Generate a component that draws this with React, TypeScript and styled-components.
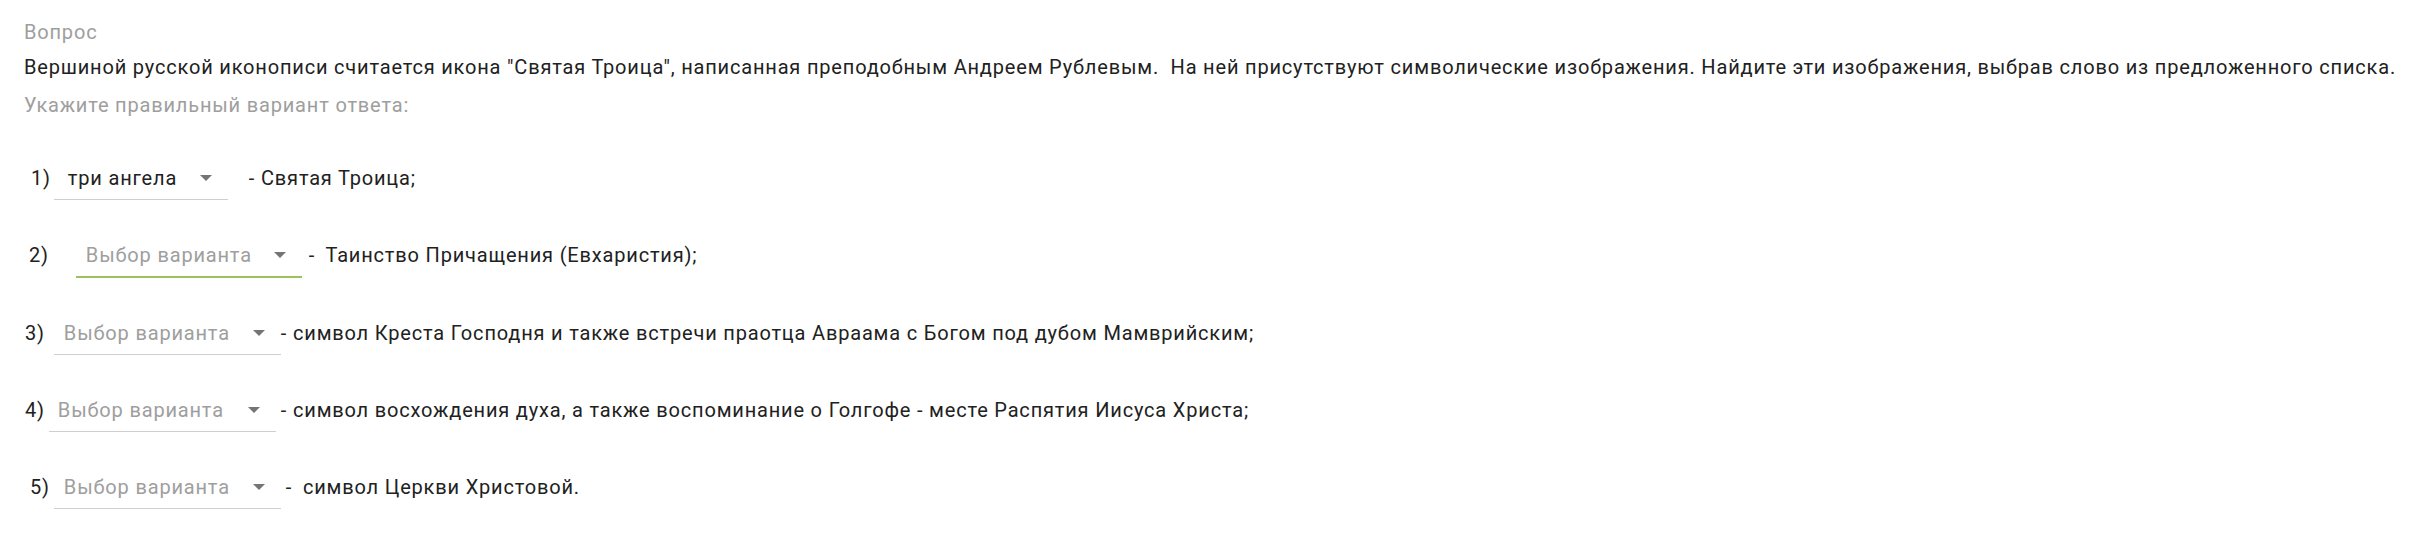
import styled, { createGlobalStyle } from 'styled-components';

const GlobalStyle = createGlobalStyle`
  body {
    margin: 0;
    background: #fff;
    font-family: Roboto, "Noto Sans", sans-serif;
    font-size: 20px;
    letter-spacing: 0.82px;
    color: #212121;
  }
`;

const Page = styled.div`
  padding: 20px 24px 0 24px;
  display: flex;
  flex-direction: column;
`;

const Caption = styled.div<{ mt?: number }>`
  line-height: 24px;
  color: #9e9e9e;
  margin-top: ${({ mt }) => mt || 0}px;
`;

const QuestionText = styled.div`
  line-height: 24px;
  margin-top: 11px;
  white-space: nowrap;
`;

const Answers = styled.div`
  display: flex;
  flex-direction: column;
  gap: 43px;
  margin-top: 49px;
`;

const Row = styled.div`
  display: flex;
  align-items: baseline;
  line-height: 24px;
  white-space: pre;
`;

const Num = styled.span<{ indent: number }>`
  margin-left: ${({ indent }) => indent}px;
`;

const Select = styled.div<{ offset: number; width: number; padLeft: number; active?: boolean }>`
  display: inline-flex;
  align-items: baseline;
  justify-content: space-between;
  box-sizing: border-box;
  margin-left: ${({ offset }) => offset}px;
  width: ${({ width }) => width}px;
  padding: 0 16px 9px ${({ padLeft }) => padLeft}px;
  border-bottom: ${({ active }) => (active ? '2px solid #9bc25c' : '1px solid #cfcfcf')};
  cursor: pointer;
`;

const Value = styled.span<{ placeholder?: boolean }>`
  color: ${({ placeholder }) => (placeholder ? '#9e9e9e' : '#212121')};
`;

const Arrow = styled.span`
  display: inline-block;
  width: 0;
  height: 0;
  border-left: 6px solid transparent;
  border-right: 6px solid transparent;
  border-top: 6px solid #757575;
  transform: translateY(-4px);
`;

const Tail = styled.span<{ offset: number }>`
  margin-left: ${({ offset }) => offset}px;
`;

type Answer = {
  n: number;
  indent: number;
  offset: number;
  width: number;
  padLeft: number;
  value?: string;
  active?: boolean;
  tailOffset: number;
  tail: string;
};

const answers: Answer[] = [
  { n: 1, indent: 7, offset: 3, width: 174, padLeft: 14, value: 'три ангела', tailOffset: 21, tail: '- Святая Троица;' },
  { n: 2, indent: 5, offset: 27, width: 226, padLeft: 10, active: true, tailOffset: 7, tail: '-\u2009 Таинство Причащения (Евхаристия);' },
  { n: 3, indent: 1, offset: 9, width: 227, padLeft: 10, tailOffset: 0, tail: '- символ Креста Господня и также встречи праотца Авраама с Богом под дубом Мамврийским;' },
  { n: 4, indent: 1, offset: 4, width: 227, padLeft: 9, tailOffset: 5, tail: '- символ восхождения духа, а также воспоминание о Голгофе - месте Распятия Иисуса Христа;' },
  { n: 5, indent: 6, offset: 4, width: 227, padLeft: 10, tailOffset: 5, tail: '-\u2009 символ Церкви Христовой.' },
];

export default function App() {
  return (
    <>
      <GlobalStyle />
      <Page>
        <Caption>Вопрос</Caption>
        <QuestionText>
          Вершиной русской иконописи считается икона "Святая Троица", написанная преподобным Андреем Рублевым.&nbsp; На ней присутствуют символические изображения. Найдите эти изображения, выбрав слово из предложенного списка.
        </QuestionText>
        <Caption mt={14}>Укажите правильный вариант ответа:</Caption>
        <Answers>
          {answers.map((a) => (
            <Row key={a.n}>
              <Num indent={a.indent}>{a.n})</Num>
              <Select offset={a.offset} width={a.width} padLeft={a.padLeft} active={a.active}>
                <Value placeholder={!a.value}>{a.value || 'Выбор варианта'}</Value>
                <Arrow />
              </Select>
              <Tail offset={a.tailOffset}>{a.tail}</Tail>
            </Row>
          ))}
        </Answers>
      </Page>
    </>
  );
}
